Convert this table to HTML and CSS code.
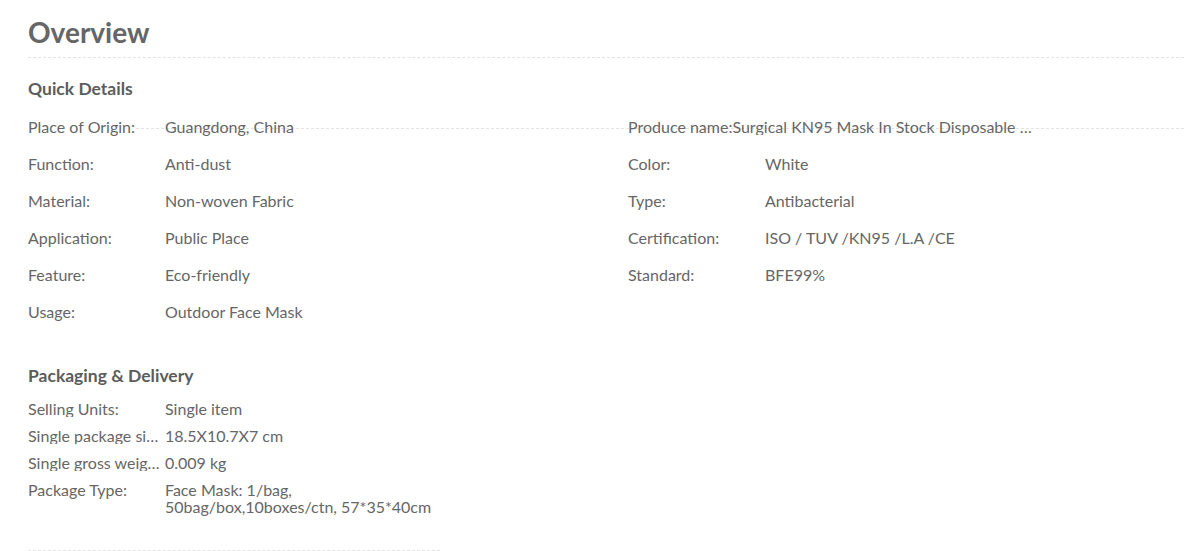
FILE: index.html
```html
<!DOCTYPE html>
<html lang="en">
<head>
<meta charset="utf-8">
<title>Overview</title>
<link rel="stylesheet" href="styles.css">
</head>
<body>
<div class="overview">
  <h1 class="overview-title">Overview</h1>

  <section class="quick">
    <h2 class="section-title">Quick Details</h2>
    <div class="quick-grid">
      <div class="quick-col">
        <div class="attr"><span class="attr-name">Place of Origin:</span><span class="attr-value">Guangdong, China</span></div>
        <div class="attr"><span class="attr-name">Function:</span><span class="attr-value">Anti-dust</span></div>
        <div class="attr"><span class="attr-name">Material:</span><span class="attr-value">Non-woven Fabric</span></div>
        <div class="attr"><span class="attr-name">Application:</span><span class="attr-value">Public Place</span></div>
        <div class="attr"><span class="attr-name">Feature:</span><span class="attr-value">Eco-friendly</span></div>
        <div class="attr"><span class="attr-name">Usage:</span><span class="attr-value">Outdoor Face Mask</span></div>
      </div>
      <div class="quick-col">
        <div class="attr"><span class="attr-full">Produce name:Surgical KN95 Mask In Stock Disposable Face Mask</span></div>
        <div class="attr"><span class="attr-name">Color:</span><span class="attr-value">White</span></div>
        <div class="attr"><span class="attr-name">Type:</span><span class="attr-value">Antibacterial</span></div>
        <div class="attr"><span class="attr-name">Certification:</span><span class="attr-value">ISO / TUV /KN95 /L.A /CE</span></div>
        <div class="attr"><span class="attr-name">Standard:</span><span class="attr-value">BFE99%</span></div>
      </div>
    </div>
  </section>

  <section class="packaging">
    <h2 class="section-title">Packaging &amp; Delivery</h2>
    <div class="pack-list">
      <div class="pack-row"><span class="pack-name">Selling Units:</span><span class="pack-value">Single item</span></div>
      <div class="pack-row"><span class="pack-name">Single package size:</span><span class="pack-value">18.5X10.7X7 cm</span></div>
      <div class="pack-row"><span class="pack-name">Single gross weight:</span><span class="pack-value">0.009 kg</span></div>
      <div class="pack-row"><span class="pack-name">Package Type:</span><span class="pack-value">Face Mask: 1/bag, 50bag/box,10boxes/ctn, 57*35*40cm</span></div>
    </div>
  </section>
</div>
</body>
</html>
```

FILE: styles.css
```css
html {
  background: #fff;
}

html, body {
  margin: 0;
  padding: 0;
  overflow: hidden;
}

body {
  font-family: Lato, "Open Sans", Arial, sans-serif;
  color: #666;
}

.overview {
  padding: 15px 0 0 28px;
}

.overview-title {
  margin: 0;
  font-size: 28px;
  line-height: 34px;
  font-weight: 700;
  color: #666;
  padding-bottom: 8px;
  border-bottom: 1px dashed #e3e3e3;
}

.section-title {
  margin: 0;
  font-size: 17.5px;
  line-height: 22px;
  font-weight: 700;
  color: #5c5c5c;
}

.quick {
  margin-top: 20px;
}

.quick-grid {
  position: relative;
  display: flex;
  margin-top: 8px;
}

.quick-grid::before {
  content: "";
  position: absolute;
  left: 108px;
  right: 0;
  top: 20px;
  border-top: 1px dashed #e3e3e3;
  z-index: -1;
}

.quick-col {
  width: 600px;
  flex: none;
}

.attr {
  display: flex;
  font-size: 16px;
  line-height: 17px;
  padding: 10px 0;
  white-space: nowrap;
}

.attr-name {
  width: 137px;
  flex: none;
}

.attr-full {
  display: block;
  width: 410px;
  overflow: hidden;
  text-overflow: ellipsis;
}

.packaging {
  margin-top: 35px;
  width: 412px;
  padding-bottom: 30px;
  border-bottom: 1px dashed #e3e3e3;
}

.pack-list {
  margin-top: 8px;
}

.pack-row {
  display: flex;
  font-size: 16px;
  line-height: 17px;
  padding: 5px 0;
}

.pack-name {
  width: 133px;
  padding-right: 4px;
  flex: none;
  white-space: nowrap;
  overflow: hidden;
  text-overflow: ellipsis;
}

.pack-value {
  flex: 1;
}
```
